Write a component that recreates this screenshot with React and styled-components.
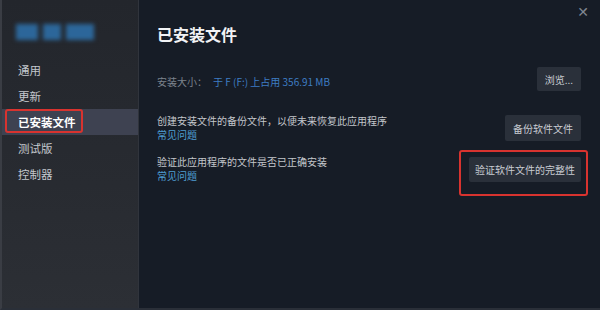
import React from "react";
import styled, { createGlobalStyle } from "styled-components";

const Global = createGlobalStyle`
  html, body { margin: 0; padding: 0; background: #161c26; }
  body { font-family: "Noto Sans CJK SC", "Noto Sans", sans-serif; }
  * { box-sizing: border-box; }
`;

const Window = styled.div`
  width: 600px;
  height: 310px;
  display: flex;
  position: relative;
  overflow: hidden;
  border-left: 2px solid #3a3d44;
  border-bottom: 2px solid #2a2f38;
  background: #161c26;
`;

const Sidebar = styled.div`
  width: 137px;
  flex-shrink: 0;
  background: linear-gradient(180deg, #23262c 0%, #282b31 60%, #2c2f35 100%);
  border-right: 1px solid #30343c;
  display: flex;
  flex-direction: column;
  padding-top: 24px;
`;

const Logo = styled.div`
  display: flex;
  gap: 5px;
  padding-left: 14px;
  height: 18px;
  margin-bottom: 15px;
  filter: blur(2px);
`;

const LogoBlock = styled.div`
  width: ${(p) => p.$w}px;
  height: 16px;
  background: #2d6ea6;
  opacity: 0.9;
`;

const NavItem = styled.div`
  position: relative;
  height: 26px;
  display: flex;
  align-items: center;
  padding-left: 16px;
  font-size: 11.5px;
  color: ${(p) => (p.$active ? "#ffffff" : "#c3c7cd")};
  font-weight: ${(p) => (p.$active ? 700 : 400)};
  background: ${(p) => (p.$active ? "#3e4251" : "transparent")};
`;

const Highlight = styled.div`
  position: absolute;
  border: 2px solid #d8332f;
  border-radius: 3px;
  left: ${(p) => p.$l}px;
  top: ${(p) => p.$t}px;
  width: ${(p) => p.$w}px;
  height: ${(p) => p.$h}px;
  pointer-events: none;
`;

const Main = styled.div`
  flex: 1;
  position: relative;
  padding: 24px 19px 0 18px;
  display: flex;
  flex-direction: column;
`;

const Close = styled.div`
  position: absolute;
  right: 11px;
  top: 5px;
  color: #7f8690;
  font-size: 14px;
  line-height: 14px;
  font-family: "DejaVu Sans", sans-serif;
`;

const Title = styled.div`
  font-size: 16px;
  line-height: 20px;
  font-weight: 700;
  color: #f2f3f5;
  margin-bottom: 23px;
`;

const Row = styled.div`
  display: flex;
  align-items: center;
  justify-content: space-between;
  min-height: ${(p) => p.$h}px;
  margin-bottom: ${(p) => p.$mb}px;
`;

const Label = styled.span`
  font-size: 10px;
  color: #7c838d;
`;

const Value = styled.span`
  font-size: 10px;
  color: #3e7dc4;
  margin-left: 6px;
`;

const TextBlock = styled.div`
  display: flex;
  flex-direction: column;
  gap: 2px;
  font-size: 10px;
  line-height: 12px;
`;

const Desc = styled.span`
  color: #c3c6cb;
`;

const Link = styled.span`
  color: #4f9ed3;
`;

const Button = styled.div`
  height: ${(p) => p.$h}px;
  padding: 0 ${(p) => p.$px}px;
  display: flex;
  align-items: center;
  background: #2a303a;
  border-radius: 2px;
  color: #c8ccd2;
  font-size: 10px;
`;

export default function App() {
  const nav = ["通用", "更新", "已安装文件", "测试版", "控制器"];
  return (
    <>
      <Global />
      <Window>
        <Sidebar>
          <Logo>
            <LogoBlock $w={22} />
            <LogoBlock $w={18} />
            <LogoBlock $w={28} />
          </Logo>
          {nav.map((n, i) => (
            <NavItem key={n} $active={i === 2}>
              {n}
            </NavItem>
          ))}
        </Sidebar>
        <Main>
          <Close>✕</Close>
          <Title>已安装文件</Title>
          <Row $h={24} $mb={24}>
            <div>
              <Label>安装大小：</Label>
              <Value>于 F (F:) 上占用 356.91 MB</Value>
            </div>
            <Button $h={24} $px={8}>浏览...</Button>
          </Row>
          <Row $h={26} $mb={15}>
            <TextBlock>
              <Desc>创建安装文件的备份文件，以便未来恢复此应用程序</Desc>
              <Link>常见问题</Link>
            </TextBlock>
            <Button $h={26} $px={8}>备份软件文件</Button>
          </Row>
          <Row $h={26} $mb={0}>
            <TextBlock>
              <Desc>验证此应用程序的文件是否已正确安装</Desc>
              <Link>常见问题</Link>
            </TextBlock>
            <Button $h={25} $px={6}>验证软件文件的完整性</Button>
          </Row>
        </Main>
        <Highlight $l={3} $t={109} $w={78} $h={24} />
        <Highlight $l={457} $t={150} $w={129} $h={46} />
      </Window>
    </>
  );
}
